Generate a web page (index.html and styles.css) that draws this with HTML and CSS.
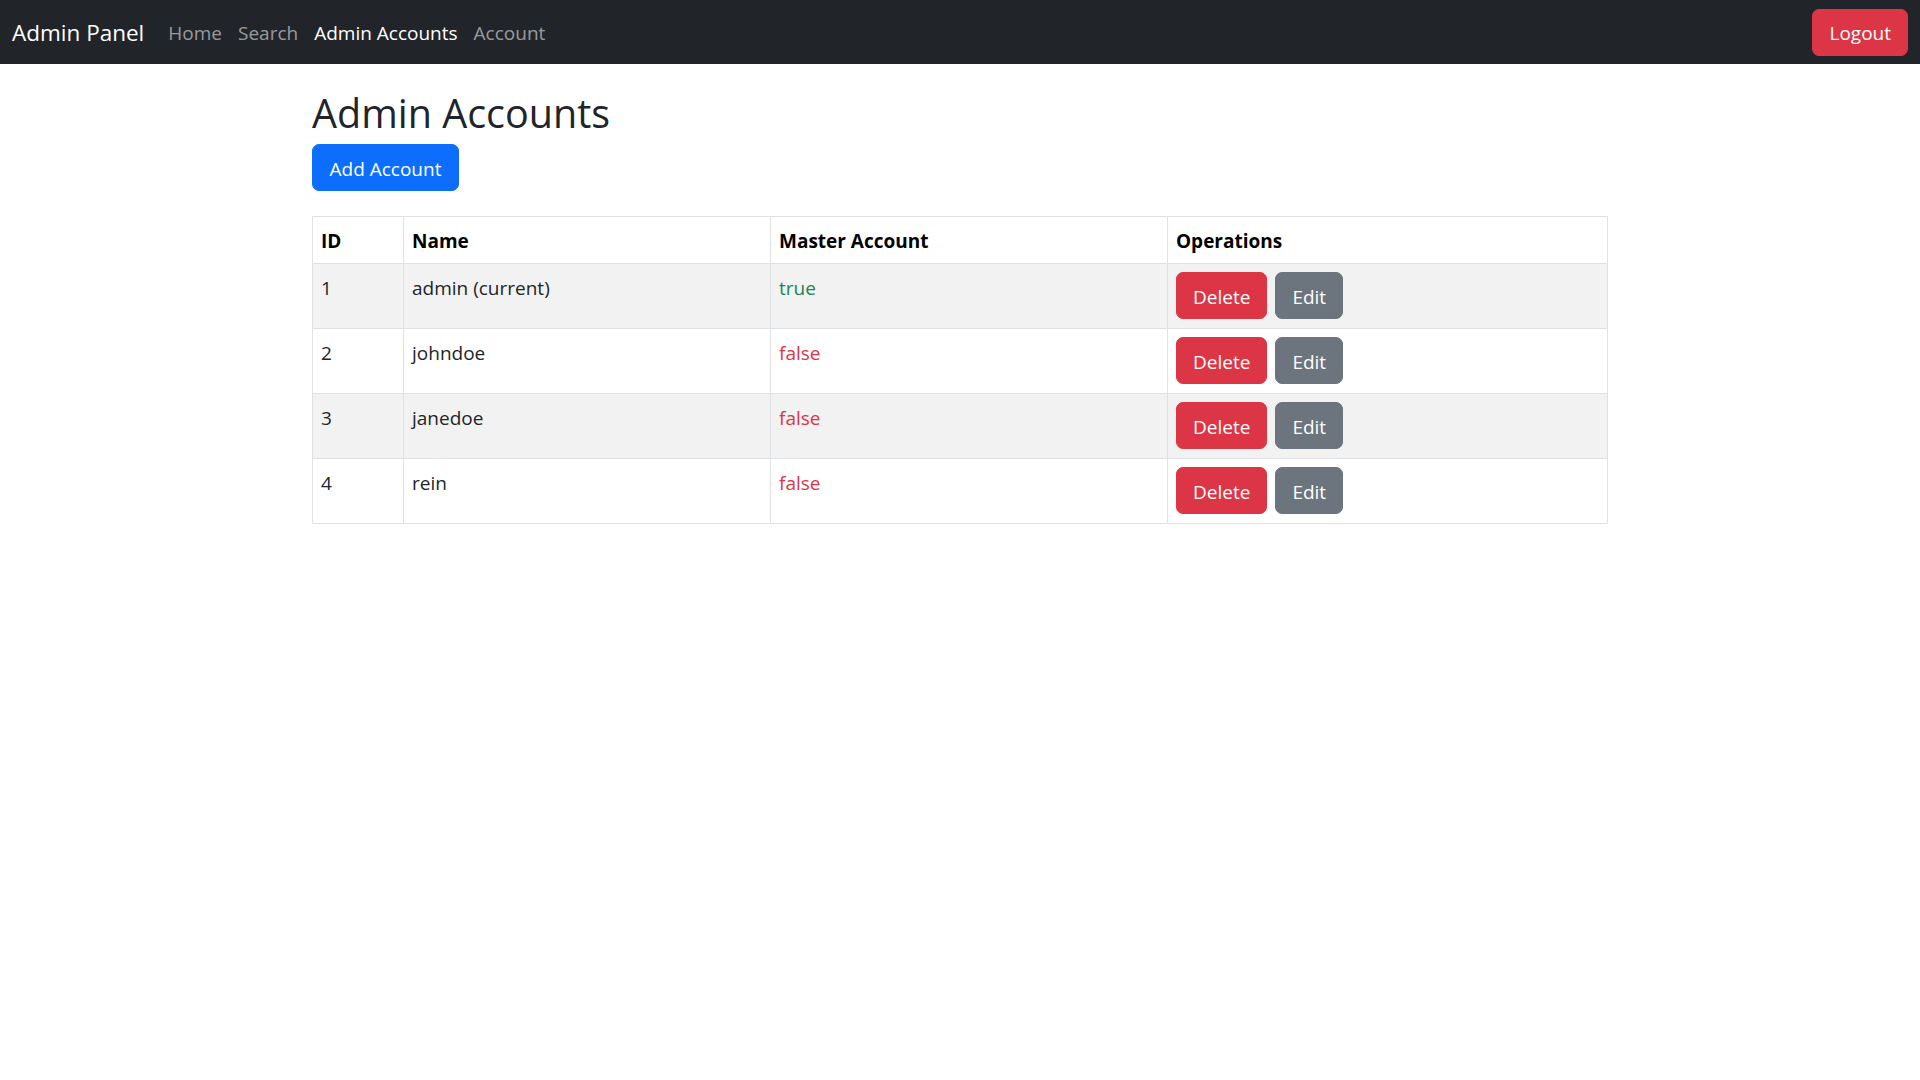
FILE: index.html
```html
<!DOCTYPE html>
<html lang="en">
<head>
<meta charset="utf-8">
<title>Admin Accounts</title>
<link rel="stylesheet" href="styles.css">
</head>
<body>
<nav class="navbar">
  <div class="nav-left">
    <a class="brand" href="#">Admin Panel</a>
    <ul class="nav-links">
      <li><a class="nav-link" href="#">Home</a></li>
      <li><a class="nav-link" href="#">Search</a></li>
      <li><a class="nav-link active" href="#">Admin Accounts</a></li>
      <li><a class="nav-link" href="#">Account</a></li>
    </ul>
  </div>
  <button class="btn btn-danger">Logout</button>
</nav>
<main class="container">
  <h1 class="title">Admin Accounts</h1>
  <button class="btn btn-primary">Add Account</button>
  <table class="table">
    <thead>
      <tr>
        <th class="col-id">ID</th>
        <th class="col-name">Name</th>
        <th class="col-master">Master Account</th>
        <th class="col-ops">Operations</th>
      </tr>
    </thead>
    <tbody>
      <tr class="striped">
        <td>1</td>
        <td>admin (current)</td>
        <td class="yes">true</td>
        <td><div class="ops"><button class="btn btn-danger">Delete</button><button class="btn btn-secondary">Edit</button></div></td>
      </tr>
      <tr>
        <td>2</td>
        <td>johndoe</td>
        <td class="no">false</td>
        <td><div class="ops"><button class="btn btn-danger">Delete</button><button class="btn btn-secondary">Edit</button></div></td>
      </tr>
      <tr class="striped">
        <td>3</td>
        <td>janedoe</td>
        <td class="no">false</td>
        <td><div class="ops"><button class="btn btn-danger">Delete</button><button class="btn btn-secondary">Edit</button></div></td>
      </tr>
      <tr>
        <td>4</td>
        <td>rein</td>
        <td class="no">false</td>
        <td><div class="ops"><button class="btn btn-danger">Delete</button><button class="btn btn-secondary">Edit</button></div></td>
      </tr>
    </tbody>
  </table>
</main>
</body>
</html>
```
FILE: styles.css
```css
* { box-sizing: border-box; }
html, body { margin: 0; padding: 0; }
body {
  font-family: "Open Sans", "Noto Sans", "Liberation Sans", sans-serif;
  font-size: 19px;
  line-height: 30px;
  color: #212529;
  background: #fff;
}
a { text-decoration: none; }

.navbar {
  height: 64px;
  background: #212529;
  padding: 8px 12px;
  display: flex;
  align-items: center;
  justify-content: space-between;
}
.nav-left { display: flex; align-items: center; padding-top: 2px; }
.brand {
  color: #fff;
  font-size: 22.5px;
  line-height: 36px;
  margin-right: 16px;
}
.nav-links { list-style: none; margin: 0; padding: 0; display: flex; }
.nav-link {
  display: block;
  padding: 0 8px;
  color: rgba(255, 255, 255, 0.55);
}
.nav-link.active { color: #fff; }

.btn {
  font-family: inherit;
  font-size: 19px;
  line-height: 30px;
  padding: 8.5px 16px 6.5px;
  border: 1px solid transparent;
  border-radius: 7px;
  color: #fff;
  cursor: pointer;
}
.btn-primary { padding-left: 16.5px; padding-right: 16.5px; }
.btn-danger { background: #dc3545; border-color: #dc3545; }
.btn-primary { background: #0d6efd; border-color: #0d6efd; }
.btn-secondary { background: #6c757d; border-color: #6c757d; }

.container {
  width: 1296px;
  margin: 0 auto;
  padding-top: 25px;
}
.title {
  margin: 0 0 7px;
  font-size: 39.5px;
  line-height: 48px;
  font-weight: 500;
}
.table {
  margin-top: 25px;
  width: 1296px;
  border-collapse: collapse;
}
.table th, .table td {
  border: 1px solid #dee2e6;
  padding: 9px 8px 7px;
  text-align: left;
  vertical-align: top;
}
.table td { padding-bottom: 8px; }
.table td:last-child { padding-top: 8px; padding-bottom: 9px; }
.table th { font-weight: 700; color: #000; }
.col-id { width: 91px; }
.col-name { width: 367px; }
.col-master { width: 397px; }
.table tr.striped td { background: #f2f2f2; }
.yes { color: #198754; }
.no { color: #dc3545; }
.ops { display: flex; gap: 8px; }
```
